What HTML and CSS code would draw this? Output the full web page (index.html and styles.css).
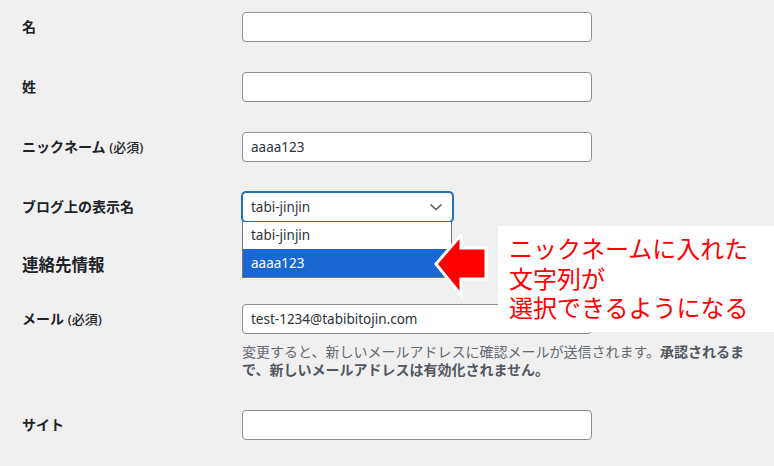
FILE: index.html
```html
<!DOCTYPE html>
<html lang="ja">
<head>
    <meta charset="UTF-8">
    <meta name="viewport" content="width=device-width, initial-scale=1.0">
    <title>プロフィール</title>
    <link rel="stylesheet" href="styles.css">
</head>
<body>
    <div class="form">
        <div class="row">
            <label class="label">名</label>
            <input class="field" type="text">
        </div>
        <div class="row">
            <label class="label">姓</label>
            <input class="field" type="text">
        </div>
        <div class="row">
            <label class="label">ニックネーム <span class="req">(必須)</span></label>
            <input class="field" type="text" value="aaaa123">
        </div>
        <div class="row">
            <label class="label">ブログ上の表示名</label>
            <div class="select-wrap">
                <div class="select">
                    <span>tabi-jinjin</span>
                    <svg class="chevron" width="14" height="8" viewBox="0 0 14 8">
                        <polyline points="1.5,1.5 7,6.5 12.5,1.5" fill="none" stroke="#50575e" stroke-width="1.6"/>
                    </svg>
                </div>
                <ul class="options">
                    <li>tabi-jinjin</li>
                    <li class="active">aaaa123</li>
                </ul>
            </div>
        </div>

        <h2 class="section">連絡先情報</h2>

        <div class="row row-email">
            <label class="label">メール <span class="req">(必須)</span></label>
            <div>
                <input class="field" type="text" value="test-1234@tabibitojin.com">
                <p class="desc">変更すると、新しいメールアドレスに確認メールが送信されます。<strong>承認されるまで、新しいメールアドレスは有効化されません。</strong></p>
            </div>
        </div>
        <div class="row">
            <label class="label">サイト</label>
            <input class="field" type="text">
        </div>
    </div>

    <!-- 注釈 -->
    <svg class="arrow" width="60" height="72" viewBox="0 0 60 72">
        <polygon points="4,30 29,1 29,14 54,14 54,45 29,45 29,61" fill="#ff0000" stroke="#ffffff" stroke-width="3" stroke-linejoin="miter"/>
    </svg>
    <div class="note">ニックネームに入れた<br>文字列が<br>選択できるようになる</div>
</body>
</html>
```

FILE: styles.css
```css
body {
    margin: 0;
    background-color: #f0f0f1;
    font-family: "Noto Sans", "Noto Sans CJK JP", sans-serif;
    color: #1d2327;
}
.form {
    padding-left: 22px;
}
.row {
    display: grid;
    grid-template-columns: 220px 350px;
    align-items: start;
    padding: 12px 0 18px;
}
.label {
    font-size: 14px;
    font-weight: 700;
    line-height: 30px;
}
.req {
    font-size: 13px;
    font-weight: 500;
}
.field {
    box-sizing: border-box;
    width: 350px;
    height: 30px;
    margin: 0;
    padding: 0 8px;
    border: 1px solid #8c8f94;
    border-radius: 4px;
    background: #fff;
    font-family: inherit;
    font-size: 13.5px;
    color: #2c3338;
}
.select-wrap {
    position: relative;
    width: 211px;
}
.select {
    box-sizing: border-box;
    height: 30px;
    display: flex;
    align-items: center;
    justify-content: space-between;
    padding: 0 9px 0 8px;
    border: 1px solid #2271b1;
    box-shadow: 0 0 0 1px #2271b1;
    border-radius: 4px;
    background: #fff;
    font-size: 13.5px;
    color: #2c3338;
}
.options {
    position: absolute;
    top: 30px;
    left: 0;
    box-sizing: border-box;
    width: 210px;
    margin: 0;
    padding: 0;
    list-style: none;
    background: #fff;
    border: 1px solid #767676;
    border-top: none;
    font-size: 13.5px;
    color: #2c3338;
}
.options li {
    height: 27px;
    line-height: 27px;
    padding-left: 8px;
}
.options li.active {
    height: 28px;
    line-height: 28px;
    background-color: #1967d2;
    color: #fff;
}
.section {
    margin: 13px 0 15px;
    font-size: 16.5px;
    font-weight: 700;
    line-height: 24px;
}
.row-email {
    padding-bottom: 19px;
}
.desc {
    width: 510px;
    margin: 9px 0 0;
    font-size: 14px;
    line-height: 18.2px;
    color: #646970;
}
.desc strong {
    color: #50575e;
}
.arrow {
    position: absolute;
    left: 432px;
    top: 234px;
}
.note {
    position: absolute;
    left: 498px;
    top: 226px;
    box-sizing: border-box;
    width: 276px;
    height: 106px;
    padding: 7px 0 0 11px;
    background: #fff;
    color: #ff0000;
    font-family: "Noto Sans CJK JP", sans-serif;
    font-size: 24px;
    line-height: 29.5px;
}
```
